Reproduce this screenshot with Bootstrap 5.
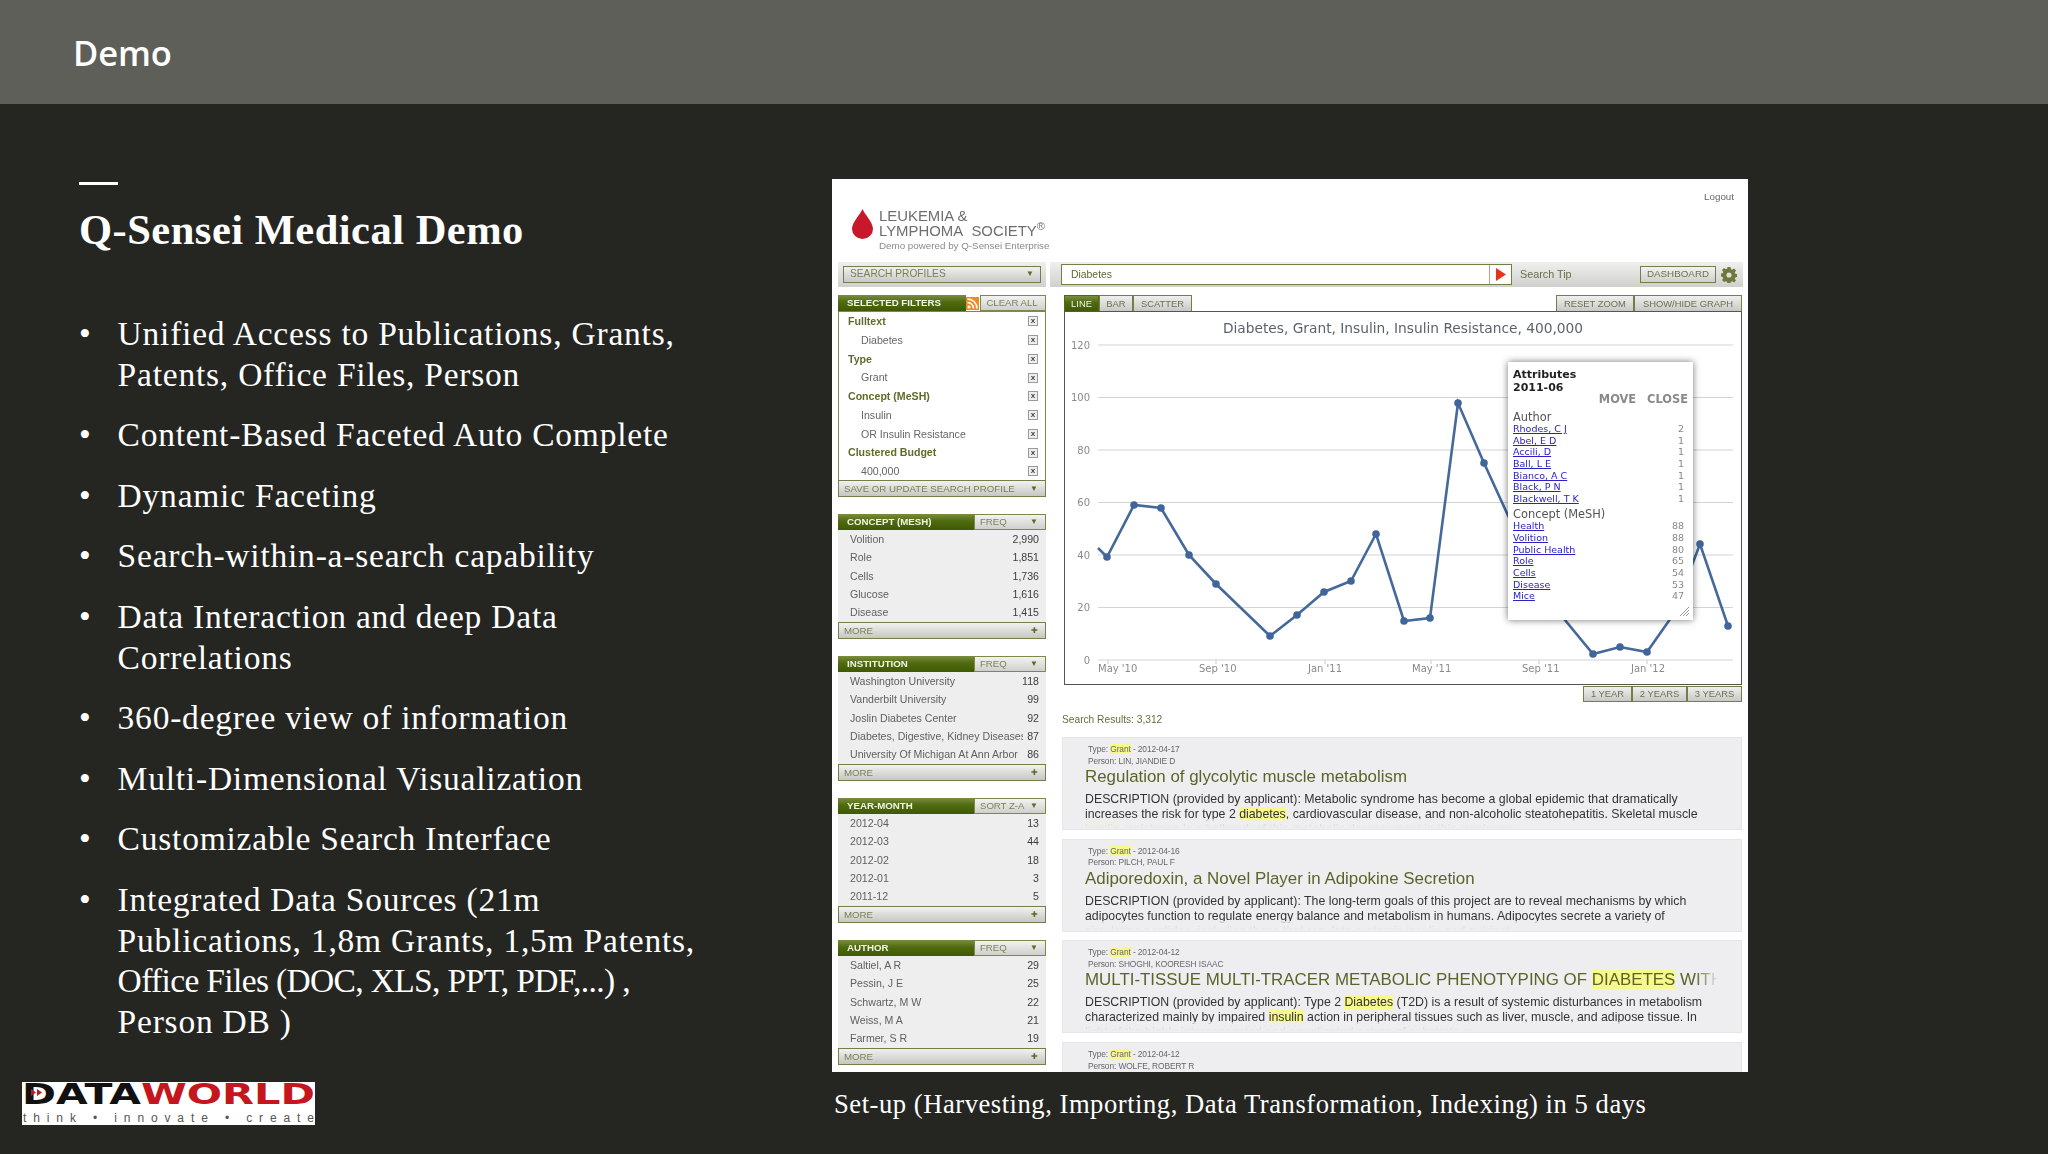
<!DOCTYPE html>
<html lang="en">
<head>
<meta charset="utf-8">
<title>Demo</title>
<link href="https://cdn.jsdelivr.net/npm/bootstrap@5.3.0/dist/css/bootstrap.min.css" rel="stylesheet">
<style>
html,body{margin:0;background:#252622}
.slide{width:2048px;height:1154px;overflow:hidden;background:#252622;color:#fff}
.topband{height:104px;background:#5e5f59;padding-left:73px;font:600 34.5px/106px "Open Sans",sans-serif;letter-spacing:-.1px}
.leftcol{width:832px;padding-left:79px}
.dash{width:39px;height:3px;background:#fff;margin-top:78px}
.deck-title{font:700 42.5px/50px "Liberation Serif",serif;margin:20px 0 0;letter-spacing:.5px}
.pts{margin:59px 0 0;padding:0;list-style:none;font:33.5px/40.6px "Liberation Serif",serif;letter-spacing:.78px;white-space:nowrap}
.pts li{display:flex;margin-bottom:20px}
.pts li::before{content:"•";width:38.6px;flex:none}
.pts-tight{letter-spacing:-.65px}
.dwlogo{display:block;width:293px;height:43px;margin:40px 0 0 -57px;background:#fff}
.rightcol{width:916px;padding-top:75px}
.shot{height:893px;background:#fff;overflow:hidden;font-family:"Liberation Sans",Arial,sans-serif;color:#555;filter:blur(.35px)}
.shot-top{height:83px}
.lls{padding:30px 0 0 20px;gap:6px}
.lls-t{color:#6e6e6e;font-size:14.9px;line-height:15px;white-space:nowrap}
.lls-s{font-size:9.8px;line-height:12px;color:#8a8a8a;margin-top:1px}
.logout{font-size:9.8px;color:#666;padding:11px 14px 0 0}
.sidebar{width:208px;margin-left:6px;flex:none}
.graybar{background:linear-gradient(#efefee,#d0d0ce);height:25px}
.sel{margin:4px 5px;height:17px;border:1.5px solid #747f48;background:linear-gradient(#f0f0ee,#c8c8c6);font-size:10.2px;line-height:14px;color:#7b8053;padding:0 6px}
.arr{color:#5c6a28;font-size:8px}
.fhead{height:16px;font-size:9.7px;line-height:16px}
.fhead-t{background:linear-gradient(#7b8d40,#4f6a0f 45%,#3f5a04);color:#f2f4e6;font-weight:700;padding-left:9px}
.fhead-s{width:72px;flex:none;background:linear-gradient(#f2f2f0,#cfcfcc);border:1px solid #7b8a4a;color:#7d8258;line-height:13px;padding:0 7px 0 5px;font-size:9.6px}
.fhead-w{width:66px;justify-content:center}
.rss{width:13px;height:13px;flex:none;margin:1.5px 1px 0 0}
.first-gap{margin-top:8px}
.flist{height:169px;border:1px solid #7b8a4a;border-bottom:0;padding:0 7px 0 9px}
.frow{height:18.75px;line-height:18.75px;font-size:10.6px}
.frow b{color:#5f6b2a;font-weight:700}
.frow .sub{padding-left:13px;color:#666}
.xb{width:10px;height:10px;border:1px solid #9a9a9a;background:#eee;color:#444;font:700 8px/8px "Liberation Sans",sans-serif;text-align:center}
.sbar{height:17px;border:1.5px solid #747f48;background:linear-gradient(#f1f1ef,#c6c6c3);font-size:9.7px;line-height:15px;color:#7b8053;padding:0 7px 0 5px}
.panel{margin-top:17px}
.frows{background:#eeeeef;height:92px;padding:0 7px 0 12px}
.xrow{height:18.3px;line-height:18.3px;font-size:10.6px;color:#606060}
.xrow span:first-child{width:173px;overflow:hidden;white-space:nowrap}
.xrow span:last-child{color:#3d3d3d}
.content{width:693px;margin-left:4px;flex:none}
.qbox{width:451px;height:21px;margin-left:11px;border:1.5px solid #747f48;background:#fff;font-size:10.4px;color:#5f6535;line-height:20px;padding-left:9px}
.qgo{width:22px;border-left:1px solid #a9ae8a;display:flex;align-items:center;justify-content:center}
.qtip{margin-left:8px;font-size:10.8px;color:#6a6f48}
.dashb{width:76px;height:17px;margin-left:auto;border:1.5px solid #747f48;background:linear-gradient(#f2f2f0,#cfcfcc);font-size:9.8px;line-height:14px;color:#6d7150;text-align:center}
.gear{margin:0 6px 0 5px;flex:none}
.charea{margin:8px 0 0 14px;width:678px}
.tabs{height:17px}
.tb{height:17px;border:1px solid #747f48;background:linear-gradient(#efefee,#c8c8c5);font-size:9.4px;line-height:15px;color:#6d7150;text-align:center}
.tb-on{background:linear-gradient(#7b8d40,#4f6a0f 45%,#3f5a04);color:#f2f4e6;border-color:#4f6a0f}
.tabw-35{width:35px}.tabw-34{width:34px}.tabw-59{width:59px}.tabw-78{width:78px}.tabw-108{width:108px}.tabw-49{width:49px}.tabw-55{width:55px}
.chartbox{height:374px;margin-top:-1px;border:1.5px solid #555;position:relative;background:#fff}
.chartbox>svg{display:block;position:absolute;left:-1.5px;top:-1.5px}
.ctxt{font:10px "DejaVu Sans",sans-serif;fill:#8a8a8a}
.tip{position:absolute;left:443px;top:50px;width:185px;height:258px;background:#fff;box-shadow:0 0 7px rgba(0,0,0,.55);padding:6px 5px;font-family:"DejaVu Sans",sans-serif;color:#555}
.tip-h{font-weight:700;font-size:11px;line-height:13px;color:#222}
.tip-m{font-weight:700;font-size:11.4px;line-height:13px;color:#8a8a8a;gap:11px;margin-top:-1.5px}
.tip-g{font-size:11.4px;line-height:11px;color:#555;margin-top:6.5px}
.tip-g2{margin-top:4.5px}
.tip-r{font-size:9.5px;line-height:11.67px;padding-right:4px;color:#888}
.tip-r a{color:#2a22c8}
.grip{position:absolute;right:4px;bottom:4px}
.yrs{height:16px;margin-top:1px}
.yrs .tb{height:16px;line-height:14px}
.rcount{margin:12px 0 0 12px;font-size:10.2px;line-height:12px;color:#666e3c}
.rc{position:relative;margin:11px 0 -2.3px 12px;width:680px;height:93px;background:#eeeef0;border:1px solid #e6e6e8;overflow:hidden;padding:6px 0 0 22px;color:#333}
.rc::after{content:"";position:absolute;left:0;right:0;bottom:0;height:10px;background:linear-gradient(rgba(238,238,240,.72),#eeeef0 90%)}
.rm{font-size:8.4px;line-height:11.5px;color:#666;margin-left:3px;letter-spacing:-.1px}
.hl{background:#f8f98c}
.rt{font-size:16.9px;line-height:22px;color:#5a6428;white-space:nowrap;width:634px;overflow:hidden;margin-top:-1px}
.rt-fade{-webkit-mask-image:linear-gradient(to left,transparent,#000 24px);mask-image:linear-gradient(to left,transparent,#000 24px)}
.rd{font-size:12.33px;line-height:15px;margin-top:4px;white-space:nowrap}
.capt{font:26.6px/32px "Liberation Serif",serif;margin:16px 0 0 2px;letter-spacing:.53px;white-space:nowrap}
</style>
</head>
<body>
<div class="slide">
  <div class="topband">Demo</div>
  <div class="d-flex">
    <div class="leftcol">
      <div class="dash"></div>
      <h1 class="deck-title">Q-Sensei Medical Demo</h1>
      <ul class="pts">
        <li><span>Unified Access to Publications, Grants,<br>Patents, Office Files, Person</span></li>
        <li><span>Content-Based Faceted Auto Complete</span></li>
        <li><span>Dynamic Faceting</span></li>
        <li><span>Search-within-a-search capability</span></li>
        <li><span>Data Interaction and deep Data<br>Correlations</span></li>
        <li><span>360-degree view of information</span></li>
        <li><span>Multi-Dimensional Visualization</span></li>
        <li><span>Customizable Search Interface</span></li>
        <li><span>Integrated Data Sources (21m<br>Publications, 1,8m Grants, 1,5m Patents,<br><span class="pts-tight">Office Files (DOC, XLS, PPT, PDF,...) ,</span><br>Person DB )</span></li>
      </ul>
      <svg class="dwlogo" viewBox="0 0 293 43" role="img" aria-label="Dataworld logo">
        <text x="0" y="21.5" font-family="DejaVu Sans" font-weight="700" font-size="29" textLength="119" lengthAdjust="spacingAndGlyphs" fill="#111">DATA</text>
        <text x="119" y="21.5" font-family="DejaVu Sans" font-weight="700" font-size="29" textLength="174" lengthAdjust="spacingAndGlyphs" fill="#c4161c">WORLD</text>
        <path d="M9 7l5 3.500-5 3.500zM15 7l5 3.500-5 3.500z" fill="#c4161c"/>
        <text x="1" y="40" font-family="Liberation Sans" font-size="12" textLength="291" lengthAdjust="spacing" fill="#555">think • innovate • create</text>
      </svg>
    </div>
    <div class="rightcol">
      <div class="shot">
        <div class="shot-top d-flex justify-content-between">
          <div class="lls d-flex">
            <svg width="21" height="30" viewBox="0 0 21 30"><path d="M10.500 0C8 6 0 13 0 20a10.500 10 0 0 0 21 0C21 13 13 6 10.500 0z" fill="#c8192c"/></svg>
            <div>
              <div class="lls-t">LEUKEMIA &amp;</div>
              <div class="lls-t">LYMPHOMA&nbsp; SOCIETY<sup>®</sup></div>
              <div class="lls-s">Demo powered by Q-Sensei Enterprise</div>
            </div>
          </div>
          <div class="logout">Logout</div>
        </div>
        <div class="d-flex">
          <div class="sidebar">
            <div class="graybar d-flex flex-column justify-content-center">
              <div class="sel d-flex justify-content-between"><span>SEARCH PROFILES</span><span class="arr">▼</span></div>
            </div>
            <div class="first-gap">
              <div class="fhead d-flex">
                <div class="fhead-t flex-grow-1">SELECTED FILTERS</div>
                <svg class="rss" viewBox="0 0 13 13"><rect width="13" height="13" fill="#f08a24"/><circle cx="3" cy="10" r="1.500" fill="#fff"/><path d="M1.500 5.500a6 6 0 0 1 6 6M1.500 2a9.500 9.500 0 0 1 9.500 9.500" fill="none" stroke="#fff" stroke-width="1.600"/></svg>
                <div class="fhead-s fhead-w d-flex">CLEAR ALL</div>
              </div>
              <div class="flist">
                <div class="frow d-flex justify-content-between align-items-center"><b>Fulltext</b><span class="xb">x</span></div>
                <div class="frow d-flex justify-content-between align-items-center"><span class="sub">Diabetes</span><span class="xb">x</span></div>
                <div class="frow d-flex justify-content-between align-items-center"><b>Type</b><span class="xb">x</span></div>
                <div class="frow d-flex justify-content-between align-items-center"><span class="sub">Grant</span><span class="xb">x</span></div>
                <div class="frow d-flex justify-content-between align-items-center"><b>Concept (MeSH)</b><span class="xb">x</span></div>
                <div class="frow d-flex justify-content-between align-items-center"><span class="sub">Insulin</span><span class="xb">x</span></div>
                <div class="frow d-flex justify-content-between align-items-center"><span class="sub">OR Insulin Resistance</span><span class="xb">x</span></div>
                <div class="frow d-flex justify-content-between align-items-center"><b>Clustered Budget</b><span class="xb">x</span></div>
                <div class="frow d-flex justify-content-between align-items-center"><span class="sub">400,000</span><span class="xb">x</span></div>
              </div>
              <div class="sbar d-flex justify-content-between"><span>SAVE OR UPDATE SEARCH PROFILE</span><span class="arr">▼</span></div>
            </div>

            <div class="panel">
              <div class="fhead d-flex"><div class="fhead-t flex-grow-1">CONCEPT (MESH)</div><div class="fhead-s d-flex justify-content-between"><span>FREQ</span><span class="arr">▼</span></div></div>
              <div class="frows">
                <div class="xrow d-flex justify-content-between"><span>Volition</span><span>2,990</span></div>
                <div class="xrow d-flex justify-content-between"><span>Role</span><span>1,851</span></div>
                <div class="xrow d-flex justify-content-between"><span>Cells</span><span>1,736</span></div>
                <div class="xrow d-flex justify-content-between"><span>Glucose</span><span>1,616</span></div>
                <div class="xrow d-flex justify-content-between"><span>Disease</span><span>1,415</span></div>
              </div>
              <div class="sbar d-flex justify-content-between"><span>MORE</span><span class="arr">✚</span></div>
            </div>

            <div class="panel">
              <div class="fhead d-flex"><div class="fhead-t flex-grow-1">INSTITUTION</div><div class="fhead-s d-flex justify-content-between"><span>FREQ</span><span class="arr">▼</span></div></div>
              <div class="frows">
                <div class="xrow d-flex justify-content-between"><span>Washington University</span><span>118</span></div>
                <div class="xrow d-flex justify-content-between"><span>Vanderbilt University</span><span>99</span></div>
                <div class="xrow d-flex justify-content-between"><span>Joslin Diabetes Center</span><span>92</span></div>
                <div class="xrow d-flex justify-content-between"><span>Diabetes, Digestive, Kidney Diseases</span><span>87</span></div>
                <div class="xrow d-flex justify-content-between"><span>University Of Michigan At Ann Arbor</span><span>86</span></div>
              </div>
              <div class="sbar d-flex justify-content-between"><span>MORE</span><span class="arr">✚</span></div>
            </div>

            <div class="panel">
              <div class="fhead d-flex"><div class="fhead-t flex-grow-1">YEAR-MONTH</div><div class="fhead-s d-flex justify-content-between"><span>SORT Z-A</span><span class="arr">▼</span></div></div>
              <div class="frows">
                <div class="xrow d-flex justify-content-between"><span>2012-04</span><span>13</span></div>
                <div class="xrow d-flex justify-content-between"><span>2012-03</span><span>44</span></div>
                <div class="xrow d-flex justify-content-between"><span>2012-02</span><span>18</span></div>
                <div class="xrow d-flex justify-content-between"><span>2012-01</span><span>3</span></div>
                <div class="xrow d-flex justify-content-between"><span>2011-12</span><span>5</span></div>
              </div>
              <div class="sbar d-flex justify-content-between"><span>MORE</span><span class="arr">✚</span></div>
            </div>

            <div class="panel">
              <div class="fhead d-flex"><div class="fhead-t flex-grow-1">AUTHOR</div><div class="fhead-s d-flex justify-content-between"><span>FREQ</span><span class="arr">▼</span></div></div>
              <div class="frows">
                <div class="xrow d-flex justify-content-between"><span>Saltiel, A R</span><span>29</span></div>
                <div class="xrow d-flex justify-content-between"><span>Pessin, J E</span><span>25</span></div>
                <div class="xrow d-flex justify-content-between"><span>Schwartz, M W</span><span>22</span></div>
                <div class="xrow d-flex justify-content-between"><span>Weiss, M A</span><span>21</span></div>
                <div class="xrow d-flex justify-content-between"><span>Farmer, S R</span><span>19</span></div>
              </div>
              <div class="sbar d-flex justify-content-between"><span>MORE</span><span class="arr">✚</span></div>
            </div>
          </div>

          <div class="content">
            <div class="graybar d-flex align-items-center">
              <div class="qbox d-flex justify-content-between"><span>Diabetes</span><span class="qgo"><svg width="10" height="13" viewBox="0 0 10 13"><path d="M0 0l10 6.500L0 13z" fill="#e8321a"/></svg></span></div>
              <span class="qtip">Search Tip</span>
              <div class="dashb">DASHBOARD</div>
              <svg class="gear" width="16" height="16" viewBox="0 0 16 16"><path d="M6.500 0h3l.4 2.200 1.300.6L13 1.500l2 2-1.300 1.900.6 1.300 2.200.3v3l-2.200.4-.6 1.300 1.300 1.800-2 2-1.800-1.300-1.300.6-.4 2.200h-3l-.4-2.200-1.300-.6L3 15l-2-2 1.300-1.800-.6-1.300L-.5 9.500v-3l2.200-.3.600-1.300L1 3l2-2 1.800 1.300 1.300-.6z" fill="#6b7a3a"/><circle cx="8" cy="8" r="2.600" fill="#dedede"/></svg>
            </div>
            <div class="charea">
              <div class="tabs d-flex justify-content-between">
                <div class="d-flex">
                  <div class="tb tb-on tabw-35">LINE</div>
                  <div class="tb tabw-34">BAR</div>
                  <div class="tb tabw-59">SCATTER</div>
                </div>
                <div class="d-flex">
                  <div class="tb tabw-78">RESET ZOOM</div>
                  <div class="tb tabw-108">SHOW/HIDE GRAPH</div>
                </div>
              </div>
              <div class="chartbox">
                <svg width="678" height="374" viewBox="1064 311 678 374" role="img" aria-label="Line chart">
                  <text x="1403" y="333" text-anchor="middle" font-family="DejaVu Sans" font-size="13.750" fill="#5a636c">Diabetes, Grant, Insulin, Insulin Resistance, 400,000</text>
                  <g stroke="#d4d4d8" stroke-width="1.200">
                    <path d="M1098 345H1733M1098 397.500H1733M1098 450H1733M1098 502.500H1733M1098 555H1733M1098 607.500H1733M1098 660H1733" fill="none"/>
                    <path d="M1108 660v4M1216 660v4M1325 660v4M1431 660v4M1539 660v4M1647 660v4" fill="none"/>
                  </g>
                  <g class="ctxt" text-anchor="end">
                    <text x="1090" y="349">120</text><text x="1090" y="401">100</text><text x="1090" y="454">80</text><text x="1090" y="506">60</text><text x="1090" y="559">40</text><text x="1090" y="611">20</text><text x="1090" y="664">0</text>
                  </g>
                  <g class="ctxt">
                    <text x="1098" y="672">May '10</text><text x="1199" y="672">Sep '10</text><text x="1308" y="672">Jan '11</text><text x="1412" y="672">May '11</text><text x="1522" y="672">Sep '11</text><text x="1631" y="672">Jan '12</text>
                  </g>
                  <polyline fill="none" stroke="#44699a" stroke-width="2.600" points="1098,548 1107,557 1134,505 1161,508 1189,555 1216,584 1270,636 1297,615 1324,592 1351,581 1376,534 1404,621 1430,618 1458,403 1484,463 1511,522 1538,570 1565,620 1593,654 1620,647 1647,652 1673,615 1700,544 1728,626"/>
                  <g fill="#3f659a">
                    <circle cx="1107" cy="557" r="3.800"/><circle cx="1134" cy="505" r="3.800"/><circle cx="1161" cy="508" r="3.800"/><circle cx="1189" cy="555" r="3.800"/><circle cx="1216" cy="584" r="3.800"/><circle cx="1270" cy="636" r="3.800"/><circle cx="1297" cy="615" r="3.800"/><circle cx="1324" cy="592" r="3.800"/><circle cx="1351" cy="581" r="3.800"/><circle cx="1376" cy="534" r="3.800"/><circle cx="1404" cy="621" r="3.800"/><circle cx="1430" cy="618" r="3.800"/><circle cx="1458" cy="403" r="3.800"/><circle cx="1484" cy="463" r="3.800"/><circle cx="1593" cy="654" r="3.800"/><circle cx="1620" cy="647" r="3.800"/><circle cx="1647" cy="652" r="3.800"/><circle cx="1700" cy="544" r="3.800"/><circle cx="1728" cy="626" r="3.800"/>
                  </g>
                </svg>
                <div class="tip">
                  <div class="tip-h">Attributes<br>2011-06</div>
                  <div class="tip-m d-flex justify-content-end"><span>MOVE</span><span>CLOSE</span></div>
                  <div class="tip-g">Author</div>
                  <div class="tip-r d-flex justify-content-between"><a href="#">Rhodes, C J</a><span>2</span></div>
                  <div class="tip-r d-flex justify-content-between"><a href="#">Abel, E D</a><span>1</span></div>
                  <div class="tip-r d-flex justify-content-between"><a href="#">Accili, D</a><span>1</span></div>
                  <div class="tip-r d-flex justify-content-between"><a href="#">Ball, L E</a><span>1</span></div>
                  <div class="tip-r d-flex justify-content-between"><a href="#">Bianco, A C</a><span>1</span></div>
                  <div class="tip-r d-flex justify-content-between"><a href="#">Black, P N</a><span>1</span></div>
                  <div class="tip-r d-flex justify-content-between"><a href="#">Blackwell, T K</a><span>1</span></div>
                  <div class="tip-g tip-g2">Concept (MeSH)</div>
                  <div class="tip-r d-flex justify-content-between"><a href="#">Health</a><span>88</span></div>
                  <div class="tip-r d-flex justify-content-between"><a href="#">Volition</a><span>88</span></div>
                  <div class="tip-r d-flex justify-content-between"><a href="#">Public Health</a><span>80</span></div>
                  <div class="tip-r d-flex justify-content-between"><a href="#">Role</a><span>65</span></div>
                  <div class="tip-r d-flex justify-content-between"><a href="#">Cells</a><span>54</span></div>
                  <div class="tip-r d-flex justify-content-between"><a href="#">Disease</a><span>53</span></div>
                  <div class="tip-r d-flex justify-content-between"><a href="#">Mice</a><span>47</span></div>
                  <svg class="grip" width="9" height="9" viewBox="0 0 9 9"><path d="M0 9L9 0M3 9l6-6M6 9l3-3" stroke="#999" stroke-width="1" fill="none"/></svg>
                </div>
              </div>
              <div class="yrs d-flex justify-content-end">
                <div class="tb tabw-49">1 YEAR</div>
                <div class="tb tabw-55">2 YEARS</div>
                <div class="tb tabw-55">3 YEARS</div>
              </div>
            </div>
            <div class="rcount">Search Results: 3,312</div>
            <div class="rc">
              <div class="rm">Type: <span class="hl">Grant</span> - 2012-04-17</div>
              <div class="rm">Person: LIN, JIANDIE D</div>
              <div class="rt">Regulation of glycolytic muscle metabolism</div>
              <div class="rd">DESCRIPTION (provided by applicant): Metabolic syndrome has become a global epidemic that dramatically<br>increases the risk for type 2 <span class="hl">diabetes</span>, cardiovascular disease, and non-alcoholic steatohepatitis. Skeletal muscle<br><span class="hl">insulin</span> resistance is a hallmark of this metabolic derangement in this syndrome.</div>
            </div>
            <div class="rc">
              <div class="rm">Type: <span class="hl">Grant</span> - 2012-04-16</div>
              <div class="rm">Person: PILCH, PAUL F</div>
              <div class="rt">Adiporedoxin, a Novel Player in Adipokine Secretion</div>
              <div class="rd">DESCRIPTION (provided by applicant): The long-term goals of this project are to reveal mechanisms by which<br>adipocytes function to regulate energy balance and metabolism in humans. Adipocytes secrete a variety of<br>circulating peptides, including those that regulate systemic insulin and nutrient</div>
            </div>
            <div class="rc">
              <div class="rm">Type: <span class="hl">Grant</span> - 2012-04-12</div>
              <div class="rm">Person: SHOGHI, KOORESH ISAAC</div>
              <div class="rt rt-fade">MULTI-TISSUE MULTI-TRACER METABOLIC PHENOTYPING OF <span class="hl">DIABETES</span> WITH</div>
              <div class="rd">DESCRIPTION (provided by applicant): Type 2 <span class="hl">Diabetes</span> (T2D) is a result of systemic disturbances in metabolism<br>characterized mainly by impaired <span class="hl">insulin</span> action in peripheral tissues such as liver, muscle, and adipose tissue. In<br>light of the highly interconnected and coordinated nature of substrate m</div>
            </div>
            <div class="rc">
              <div class="rm">Type: <span class="hl">Grant</span> - 2012-04-12</div>
              <div class="rm">Person: WOLFE, ROBERT R</div>
            </div>
          </div>
        </div>
      </div>
      <div class="capt">Set-up (Harvesting, Importing, Data Transformation, Indexing) in 5 days</div>
    </div>
  </div>
</div>
<script src="https://cdn.jsdelivr.net/npm/bootstrap@5.3.0/dist/js/bootstrap.bundle.min.js"></script>
</body>
</html>
